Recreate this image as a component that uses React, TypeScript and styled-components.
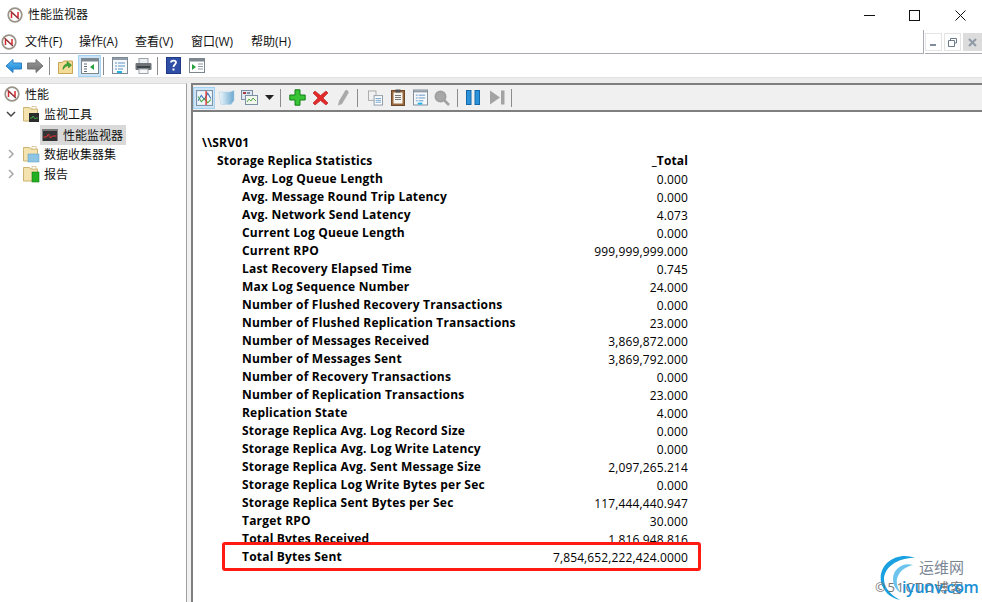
import React from "react";
import styled, { createGlobalStyle } from "styled-components";

const Global = createGlobalStyle`
  html, body { margin: 0; padding: 0; background: #fff; }
  #root { width: 982px; height: 602px; overflow: hidden; }
  * { box-sizing: border-box; }
`;

const FONT = `"Open Sans", "Noto Sans CJK SC", sans-serif`;

const Window = styled.div`
  position: relative;
  width: 982px;
  height: 602px;
  display: flex;
  flex-direction: column;
  overflow: hidden;
  background: #fff;
  font-family: ${FONT};
  font-size: 12px;
  color: #000;
`;
const TitleBar = styled.div`
  height: 30px;
  display: flex;
  align-items: center;
  padding-left: 7px;
  gap: 5px;
  flex: none;
`;
const TitleText = styled.span`
  flex: 1;
  color: #111;
  line-height: 16px;
`;
const Caption = styled.div<{ $w: number }>`
  width: ${(p) => p.$w}px;
  margin-left: -5px;
  height: 30px;
  display: flex;
  align-items: center;
  justify-content: center;
`;
const MenuRow = styled.div`
  height: 24px;
  display: flex;
  flex: none;
`;
const MenuBar = styled.div`
  flex: 1;
  display: flex;
  align-items: center;
  padding-left: 1px;
  border-bottom: 1px solid #a9a9b4;
  border-right: 1px solid #a9a9b4;
  height: 24px;
`;
const MenuItem = styled.span<{ $w: number }>`
  width: ${(p) => p.$w}px;
  line-height: 16px;
  color: #111;
  white-space: nowrap;
  &:first-of-type { margin-left: 8px; }
`;
const MdiGroup = styled.div`
  width: 57px;
  margin-left: 1px;
  display: flex;
  gap: 2px;
  padding-top: 3px;
  border-bottom: 1px solid #a9a9b4;
  height: 24px;
`;
const MdiButton = styled.div<{ $active?: boolean }>`
  width: 17px;
  height: 18px;
  flex: ${(p) => (p.$active ? "1" : "none")};
  background: ${(p) => (p.$active ? "#dcdcdc" : "#fff")};
  border: 1px solid ${(p) => (p.$active ? "#dcdcdc" : "#e4e4e4")};
  display: flex;
  align-items: center;
  justify-content: center;
`;
const MainToolbar = styled.div`
  height: 23px;
  flex: none;
  display: flex;
  align-items: center;
  padding-left: 3px;
`;
const ToolSep = styled.div<{ $l: number; $r?: number }>`
  width: 1px;
  height: 18px;
  background: #8c8c8c;
  flex: none;
  margin: 0 ${(p) => p.$r ?? 4}px 0 ${(p) => p.$l}px;
`;
const IconSlot = styled.div<{ $active?: boolean; $w?: number }>`
  width: ${(p) => p.$w ?? 23}px;
  height: 22px;
  flex: none;
  display: flex;
  align-items: center;
  justify-content: center;
  background: ${(p) => (p.$active ? "#cce4f7" : "transparent")};
  border: 1px solid ${(p) => (p.$active ? "#a6d2f2" : "transparent")};
`;
const Band = styled.div`
  height: 6px;
  flex: none;
  background: #ececec;
  border-top: 1px solid #e2e2e2;
`;
const Body = styled.div`
  flex: 1;
  min-height: 0;
  display: flex;
`;
const TreePane = styled.div`
  width: 187px;
  flex: none;
  border-right: 1px solid #a0a0a0;
  border-top: 1px solid #dcdcdc;
`;
const Splitter = styled.div`
  width: 4px;
  flex: none;
  background: #f2f2f2;
`;
const TreeRow = styled.div<{ $indent: number }>`
  height: 20px;
  display: flex;
  align-items: center;
  padding-left: ${(p) => p.$indent}px;
  gap: 5px;
  color: #111;
`;
const Twist = styled.div`
  width: 14px;
  height: 16px;
  flex: none;
  display: flex;
  align-items: center;
  justify-content: center;
`;
const Selected = styled.div`
  display: flex;
  align-items: center;
  gap: 5px;
  height: 20px;
  margin-top: 1px;
  background: #d9d9d9;
  padding: 0 3px 0 2px;
`;
const Pane = styled.div`
  flex: 1;
  min-width: 0;
  display: flex;
  flex-direction: column;
  border-left: 2px solid #7f7f7f;
  border-top: 2px solid #7f7f7f;
`;
const PaneToolbar = styled.div`
  height: 27px;
  flex: none;
  background: #f0f0f0;
  border-bottom: 2px solid #7f7f7f;
  display: flex;
  align-items: center;
`;
const Report = styled.div`
  padding: 21px 0 0 9px;
  width: 495px;
`;
const Row = styled.div<{ $indent: number }>`
  height: 18px;
  display: flex;
  justify-content: space-between;
  align-items: center;
  padding-left: ${(p) => p.$indent}px;
  white-space: nowrap;
`;
const Label = styled.span`
  font-weight: 700;
  font-size: 12px;
  letter-spacing: 0.2px;
`;
const Value = styled.span<{ $bold?: boolean }>`
  font-weight: ${(p) => (p.$bold ? 700 : 400)};
  position: relative;
  top: ${(p) => (p.$bold ? 0 : 1)}px;
  letter-spacing: 0.13px;
`;
const Callout = styled.div`
  position: relative;
  margin: -5px 0 0 20px;
  width: 479px;
  height: 29px;
  background: #fff;
  border: 3px solid #ff1a12;
  border-radius: 3px;
  display: flex;
  justify-content: space-between;
  align-items: center;
  padding: 0 10px 0 17px;
  white-space: nowrap;
`;
const Watermark = styled.div`
  position: absolute;
  left: 875px;
  top: 553px;
  width: 107px;
  height: 49px;
`;
const WmTop = styled.span`
  position: absolute;
  left: 44px;
  top: 4px;
  font-size: 15px;
  color: #7b8794;
  line-height: 20px;
`;
const WmCopy = styled.span`
  position: absolute;
  left: 0;
  top: 24px;
  font-size: 13px;
  color: #777;
  white-space: nowrap;
  letter-spacing: 1.6px;
`;
const WmSite = styled.span`
  position: absolute;
  left: 27px;
  top: 23px;
  font-size: 16px;
  font-weight: 600;
  color: #1a8fd6;
  white-space: nowrap;
  letter-spacing: -0.3px;
`;

/* ---------- icons ---------- */
const Logo = () => (
  <svg width="16" height="16" viewBox="0 0 16 16">
    <circle cx="8" cy="8" r="6.800" fill="#fff" stroke="#9a9488" strokeWidth="1.700" />
    <path d="M4.500 11V5l6.500 6V5" fill="none" stroke="#d8262c" strokeWidth="1.500" />
    <path d="M3.500 4.500l8.500 7.500" stroke="#555" strokeWidth="1" />
  </svg>
);
const Arrow = ({ dir, c1, c2, line }: { dir: "l" | "r"; c1: string; c2: string; line: string }) => (
  <svg width="18" height="16" viewBox="0 0 18 16" style={dir === "r" ? { transform: "scaleX(-1)" } : undefined}>
    <defs>
      <linearGradient id={"ag" + dir} x1="0" y1="0" x2="0" y2="1">
        <stop offset="0" stopColor={c1} />
        <stop offset="1" stopColor={c2} />
      </linearGradient>
    </defs>
    <path d="M1 8l7-6.500V5h8.500v6H8v3.500z" fill={`url(#ag${dir})`} stroke={line} strokeWidth="1" />
  </svg>
);
const FolderUp = () => (
  <svg width="18" height="18" viewBox="0 0 18 18">
    <path d="M1.500 5.500h4l1-1.500h9v12.500h-14z" fill="#f3dc98" stroke="#c9a653" />
    <path d="M6 12.500c0-3 1-5 4-5.500V4.500l4.500 3.500-3 3V8.500C9 9 7.500 10 6 12.500z" fill="#3aa535" stroke="#1d7a20" strokeWidth=".5" />
  </svg>
);
const WinPane = () => (
  <svg width="18" height="16" viewBox="0 0 18 16">
    <rect x=".5" y=".5" width="17" height="15" fill="#fff" stroke="#7c8790" />
    <rect x="1" y="1" width="16" height="2.500" fill="#7c8790" />
    <path d="M3 6h3M3 8.500h3M3 11h3M3 13.500h3" stroke="#5b6b78" />
    <path d="M13 6v6l-4-3z" fill="#27a040" />
  </svg>
);
const PageList = ({ w = 16 }: { w?: number }) => (
  <svg width={w} height="17" viewBox="0 0 16 17">
    <rect x=".5" y=".5" width="15" height="16" fill="#f6f8fa" stroke="#7d8a96" />
    <rect x="1" y="1" width="14" height="2" fill="#8f9ba6" />
    <path d="M3 6h2M6 6h7M3 9h2M6 9h7M3 12h2M6 12h5" stroke="#5f93c5" />
    <rect x="5" y="14" width="5" height="2" fill="#22b3e6" />
  </svg>
);
const Printer = () => (
  <svg width="17" height="16" viewBox="0 0 17 16">
    <rect x="4" y=".5" width="9" height="5" fill="#eceff2" stroke="#9aa3ab" />
    <rect x=".5" y="5" width="16" height="7" rx="1" fill="#6e7479" />
    <rect x="2" y="8" width="13" height="2" fill="#3e4347" />
    <rect x="4" y="11" width="9" height="4.500" fill="#f7f7f7" stroke="#9aa3ab" />
  </svg>
);
const Help = () => (
  <svg width="15" height="17" viewBox="0 0 15 17">
    <rect x=".5" y=".5" width="14" height="16" fill="#2f4ea5" stroke="#1f3a85" />
    <path d="M5 5.500C5 3 10 3 10 5.500 10 7.500 7.500 7.500 7.500 10" fill="none" stroke="#fff" strokeWidth="1.800" />
    <rect x="6.500" y="11.500" width="2" height="2" fill="#fff" />
  </svg>
);
const WinPlay = () => (
  <svg width="16" height="15" viewBox="0 0 16 15">
    <rect x=".5" y=".5" width="15" height="14" fill="#fff" stroke="#7c8790" />
    <rect x="1" y="1" width="14" height="2.500" fill="#7c8790" />
    <path d="M3 6v6l4-3z" fill="#27a040" />
    <path d="M9 6h5M9 8.500h5M9 11h5" stroke="#8a97a3" />
  </svg>
);
const Chart = () => (
  <svg width="17" height="16" viewBox="0 0 16 15">
    <rect x=".5" y=".5" width="15" height="14" fill="#eef6fb" stroke="#7d93a8" />
    <path d="M2 10l3-5 3 4 3-6 3 5" fill="none" stroke="#3a73b8" />
    <path d="M2 6l3 5 3-3 3 4 3-3" fill="none" stroke="#49a84a" />
    <path d="M9.500 1v13" stroke="#e0322c" strokeWidth="1.300" />
  </svg>
);
const Cube = () => (
  <svg width="17" height="15" viewBox="0 0 17 15">
    <defs>
      <linearGradient id="cb" x1="0" y1="0" x2="1" y2="0">
        <stop offset="0" stopColor="#f2fafe" />
        <stop offset="1" stopColor="#6aa7cf" />
      </linearGradient>
    </defs>
    <path d="M1 2h11l4-1.500v10l-3 4H3z" fill="url(#cb)" stroke="#b7d4e6" strokeWidth=".6" />
  </svg>
);
const Cards = () => (
  <svg width="17" height="15" viewBox="0 0 17 15">
    <rect x=".5" y=".5" width="11" height="9" fill="#dfe6ee" stroke="#7d8fa5" />
    <rect x="2" y="2" width="3" height="2" fill="#a43a4a" />
    <rect x="6" y="2" width="3" height="2" fill="#7d8fa5" />
    <rect x="4.500" y="5.500" width="12" height="9" fill="#f2f7ee" stroke="#7d8fa5" />
    <path d="M6 12l2-3 2 2 2-3 3 3" fill="none" stroke="#57a846" />
  </svg>
);
const Plus = () => (
  <svg width="17" height="17" viewBox="0 0 17 17">
    <path d="M6 .8h5V6h5.200v5H11v5.200H6V11H.8V6H6z" fill="#39c436" stroke="#14801a" />
  </svg>
);
const Cross = () => (
  <svg width="17" height="16" viewBox="0 0 17 16">
    <path d="M1 3l2-2 5.500 4.500L14 1l2 2-5 5 5 5-2 2-5.500-4.500L3 15l-2-2 5-5z" fill="#e42b2b" stroke="#b01a1a" strokeWidth=".6" />
  </svg>
);
const Pen = () => (
  <svg width="13" height="17" viewBox="0 0 13 17">
    <path d="M8.500 1c2-.5 3.500 1 3 3L5 15l-4 1.500L2 12z" fill="#aaa" />
  </svg>
);
const Copy = () => (
  <svg width="15" height="16" viewBox="0 0 16 16">
    <rect x=".5" y=".5" width="8" height="10" fill="#f1f1f1" stroke="#a8a8a8" />
    <rect x="6.500" y="5.500" width="9" height="10" fill="#fff" stroke="#8b98a5" />
    <path d="M8 8.500h6M8 10.500h6M8 12.500h6" stroke="#6da0cc" />
  </svg>
);
const Clip = () => (
  <svg width="14" height="17" viewBox="0 0 14 17">
    <rect x=".5" y="1.500" width="13" height="15" fill="#9a6a3e" stroke="#6d4828" />
    <rect x="2.500" y="3.500" width="9" height="11" fill="#f7f5f0" />
    <path d="M4 6.500h6M4 8.500h6M4 10.500h6" stroke="#777" />
    <rect x="4.500" y=".5" width="5" height="3" fill="#555" />
  </svg>
);
const Magnifier = () => (
  <svg width="16" height="16" viewBox="0 0 16 16">
    <circle cx="6.500" cy="6.500" r="5" fill="#a8a8a8" stroke="#a0a0a0" strokeWidth="2" />
    <path d="M10 10l5 5" stroke="#a0a0a0" strokeWidth="2.500" />
  </svg>
);
const Pause = () => (
  <svg width="14" height="15" viewBox="0 0 14 15">
    <rect x=".5" y=".5" width="4.500" height="14" fill="#2b93dc" stroke="#1868a8" />
    <rect x="9" y=".5" width="4.500" height="14" fill="#2b93dc" stroke="#1868a8" />
  </svg>
);
const Skip = () => (
  <svg width="15" height="15" viewBox="0 0 15 15">
    <path d="M0 .5l10 7-10 7z" fill="#a3a3a3" />
    <rect x="11" y=".5" width="3.500" height="14" fill="#a3a3a3" />
  </svg>
);
const Folder = ({ children }: { children?: React.ReactNode }) => (
  <svg width="16" height="16" viewBox="0 0 16 16" style={{ overflow: "visible" }}>
    <path d="M.5 3.500V1.500h6l1 1.500h7v12H.5z" fill="#f4e3ae" stroke="#cbb26f" />
    <rect x="9" y="0.500" width="4" height="2.500" fill="#fff" stroke="#cbb26f" strokeWidth=".6" />
    {children}
  </svg>
);
const Monitor = () => (
  <svg width="16" height="12" viewBox="0 0 15 12">
    <rect width="15" height="12" fill="#333" />
    <rect x="0" y="0" width="15" height="2" fill="#777" />
    <path d="M1 8h3l2-3 2 4 2-2h4" fill="none" stroke="#e33" strokeWidth="1" />
  </svg>
);

const Chevron = ({ open }: { open?: boolean }) => (
  <svg width="10" height="10" viewBox="0 0 10 10">
    {open ? (
      <path d="M1 3l4 4 4-4" fill="none" stroke="#444" strokeWidth="1.500" />
    ) : (
      <path d="M3 1l4 4-4 4" fill="none" stroke="#a6a6a6" strokeWidth="1.500" />
    )}
  </svg>
);

const rows: [string, string][] = [
  ["Avg. Log Queue Length", "0.000"],
  ["Avg. Message Round Trip Latency", "0.000"],
  ["Avg. Network Send Latency", "4.073"],
  ["Current Log Queue Length", "0.000"],
  ["Current RPO", "999,999,999.000"],
  ["Last Recovery Elapsed Time", "0.745"],
  ["Max Log Sequence Number", "24.000"],
  ["Number of Flushed Recovery Transactions", "0.000"],
  ["Number of Flushed Replication Transactions", "23.000"],
  ["Number of Messages Received", "3,869,872.000"],
  ["Number of Messages Sent", "3,869,792.000"],
  ["Number of Recovery Transactions", "0.000"],
  ["Number of Replication Transactions", "23.000"],
  ["Replication State", "4.000"],
  ["Storage Replica Avg. Log Record Size", "0.000"],
  ["Storage Replica Avg. Log Write Latency", "0.000"],
  ["Storage Replica Avg. Sent Message Size", "2,097,265.214"],
  ["Storage Replica Log Write Bytes per Sec", "0.000"],
  ["Storage Replica Sent Bytes per Sec", "117,444,440.947"],
  ["Target RPO", "30.000"],
  ["Total Bytes Received", "1,816,948.816"],
];

const menus: [string, number][] = [
  ["文件(F)", 54],
  ["操作(A)", 56],
  ["查看(V)", 56],
  ["窗口(W)", 60],
  ["帮助(H)", 54],
];

export default function App() {
  return (
    <Window>
      <Global />
      <TitleBar>
        <Logo />
        <TitleText>性能监视器</TitleText>
        <Caption $w={42}>
          <svg width="11" height="11" viewBox="0 0 11 11"><path d="M0 5.500h11" stroke="#111" /></svg>
        </Caption>
        <Caption $w={48}>
          <svg width="11" height="11" viewBox="0 0 11 11"><rect x=".5" y=".5" width="10" height="10" fill="none" stroke="#111" /></svg>
        </Caption>
        <Caption $w={44}>
          <svg width="11" height="11" viewBox="0 0 11 11"><path d="M.5.500l10 10M10.500.500l-10 10" stroke="#111" /></svg>
        </Caption>
      </TitleBar>
      <MenuRow>
        <MenuBar>
          <Logo />
          {menus.map(([m, w]) => (
            <MenuItem key={m} $w={w}>{m}</MenuItem>
          ))}
        </MenuBar>
        <MdiGroup>
          <MdiButton>
            <svg width="9" height="9" viewBox="0 0 9 9"><rect x="1" y="6" width="6" height="2" fill="#7f8c9b" /></svg>
          </MdiButton>
          <MdiButton>
            <svg width="9" height="9" viewBox="0 0 9 9"><path d="M2.500 2V.5h6v4.500H7M.5 2.500h6v6h-6z" fill="none" stroke="#6c7a89" /></svg>
          </MdiButton>
          <MdiButton $active>
            <svg width="9" height="9" viewBox="0 0 9 9"><path d="M1 1l7 7M8 1l-7 7" stroke="#8f9aa6" strokeWidth="2" /></svg>
          </MdiButton>
        </MdiGroup>
      </MenuRow>
      <MainToolbar>
        <IconSlot $w={21}><Arrow dir="l" c1="#5cc0f5" c2="#1a7ed0" line="#2b7fc4" /></IconSlot>
        <IconSlot $w={21}><Arrow dir="r" c1="#9a9a9a" c2="#6e6e6e" line="#777" /></IconSlot>
        <ToolSep $l={4} />
        <IconSlot $w={24}><FolderUp /></IconSlot>
        <IconSlot $active><WinPane /></IconSlot>
        <ToolSep $l={2} />
        <IconSlot $w={24}><PageList /></IconSlot>
        <IconSlot><Printer /></IconSlot>
        <ToolSep $l={2} />
        <IconSlot><Help /></IconSlot>
        <IconSlot><WinPlay /></IconSlot>
      </MainToolbar>
      <Band />
      <Body>
        <TreePane>
          <TreeRow $indent={4}>
            <Logo />
            <span>性能</span>
          </TreeRow>
          <TreeRow $indent={4}>
            <Twist><Chevron open /></Twist>
            <Folder>
              <rect x="6" y="7" width="10" height="9" fill="#2c2c2c" />
              <path d="M7 12h2l1-2 2 3 1-1h2" fill="none" stroke="#47c04a" strokeWidth=".8" />
            </Folder>
            <span>监视工具</span>
          </TreeRow>
          <TreeRow $indent={40}>
            <Selected>
              <Monitor />
              <span>性能监视器</span>
            </Selected>
          </TreeRow>
          <TreeRow $indent={4}>
            <Twist><Chevron /></Twist>
            <Folder>
              <rect x="5" y="8" width="11" height="8" fill="#8cc4e4" stroke="#6ba4c8" strokeWidth=".6" />
            </Folder>
            <span>数据收集器集</span>
          </TreeRow>
          <TreeRow $indent={4}>
            <Twist><Chevron /></Twist>
            <Folder>
              <rect x="9" y="6" width="7" height="10" fill="#22b022" stroke="#157f15" strokeWidth=".6" />
            </Folder>
            <span>报告</span>
          </TreeRow>
        </TreePane>
        <Splitter />
        <Pane>
          <PaneToolbar>
            <IconSlot $active $w={22}><Chart /></IconSlot>
            <IconSlot $w={22}><Cube /></IconSlot>
            <IconSlot $w={24}><Cards /></IconSlot>
            <IconSlot $w={16}>
              <svg width="9" height="5" viewBox="0 0 9 5"><path d="M0 0h9L4.500 5z" fill="#222" /></svg>
            </IconSlot>
            <ToolSep $l={3} />
            <IconSlot $w={24}><Plus /></IconSlot>
            <IconSlot $w={22}><Cross /></IconSlot>
            <IconSlot $w={24}><Pen /></IconSlot>
            <ToolSep $l={2} />
            <IconSlot $w={26}><Copy /></IconSlot>
            <IconSlot $w={20}><Clip /></IconSlot>
            <IconSlot $w={24}><PageList w={15} /></IconSlot>
            <IconSlot $w={20}><Magnifier /></IconSlot>
            <ToolSep $l={5} />
            <IconSlot $w={22}><Pause /></IconSlot>
            <IconSlot $w={26}><Skip /></IconSlot>
            <ToolSep $l={1} $r={0} />
          </PaneToolbar>
          <Report>
            <Row $indent={0}><Label>\\SRV01</Label></Row>
            <Row $indent={15}>
              <Label>Storage Replica Statistics</Label>
              <Value $bold>_Total</Value>
            </Row>
            {rows.map(([k, v]) => (
              <Row $indent={40} key={k}>
                <Label>{k}</Label>
                <Value>{v}</Value>
              </Row>
            ))}
            <Callout>
              <Label>Total Bytes Sent</Label>
              <Value>7,854,652,222,424.0000</Value>
            </Callout>
          </Report>
        </Pane>
      </Body>
      <Watermark>
        <svg width="46" height="49" viewBox="0 0 46 49">
          <path d="M40 5C24-2 3 9 6 29c2 9 9 16 19 18C16 42 9 35 9 26 9 14 24 4 40 5z" fill="#18a0e0" />
          <path d="M38 12c-10-3-20 4-20 14 0 6 3 11 8 14-3-4-5-9-4-14 2-8 8-12 16-14z" fill="#6cc4ee" />
        </svg>
        <WmTop>运维网</WmTop>
        <WmCopy>©51CTO博客</WmCopy>
        <WmSite>iyunv.com</WmSite>
      </Watermark>
    </Window>
  );
}
